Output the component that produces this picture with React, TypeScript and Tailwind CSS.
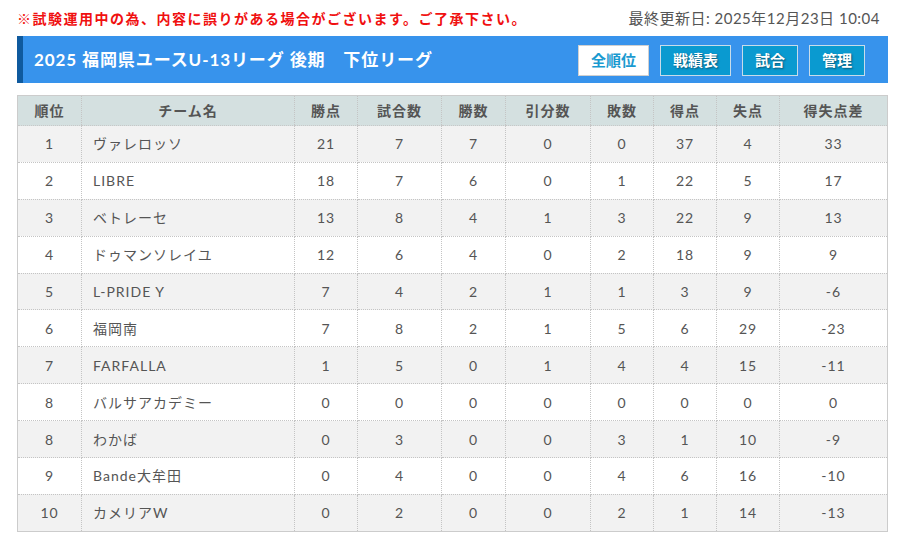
import React from "react";

type Row = {
  rank: string;
  team: string;
  pts: number;
  played: number;
  win: number;
  draw: number;
  lose: number;
  gf: number;
  ga: number;
  gd: number;
};

const rows: Row[] = [
  { rank: "1", team: "ヴァレロッソ", pts: 21, played: 7, win: 7, draw: 0, lose: 0, gf: 37, ga: 4, gd: 33 },
  { rank: "2", team: "LIBRE", pts: 18, played: 7, win: 6, draw: 0, lose: 1, gf: 22, ga: 5, gd: 17 },
  { rank: "3", team: "ベトレーセ", pts: 13, played: 8, win: 4, draw: 1, lose: 3, gf: 22, ga: 9, gd: 13 },
  { rank: "4", team: "ドゥマンソレイユ", pts: 12, played: 6, win: 4, draw: 0, lose: 2, gf: 18, ga: 9, gd: 9 },
  { rank: "5", team: "L-PRIDE Y", pts: 7, played: 4, win: 2, draw: 1, lose: 1, gf: 3, ga: 9, gd: -6 },
  { rank: "6", team: "福岡南", pts: 7, played: 8, win: 2, draw: 1, lose: 5, gf: 6, ga: 29, gd: -23 },
  { rank: "7", team: "FARFALLA", pts: 1, played: 5, win: 0, draw: 1, lose: 4, gf: 4, ga: 15, gd: -11 },
  { rank: "8", team: "バルサアカデミー", pts: 0, played: 0, win: 0, draw: 0, lose: 0, gf: 0, ga: 0, gd: 0 },
  { rank: "8", team: "わかば", pts: 0, played: 3, win: 0, draw: 0, lose: 3, gf: 1, ga: 10, gd: -9 },
  { rank: "9", team: "Bande大牟田", pts: 0, played: 4, win: 0, draw: 0, lose: 4, gf: 6, ga: 16, gd: -10 },
  { rank: "10", team: "カメリアW", pts: 0, played: 2, win: 0, draw: 0, lose: 2, gf: 1, ga: 14, gd: -13 },
];

const headers = ["順位", "チーム名", "勝点", "試合数", "勝数", "引分数", "敗数", "得点", "失点", "得失点差"];

function NavButton({ label, active }: { label: string; active?: boolean }) {
  return (
    <button
      className={
        active
          ? "h-[31px] px-[12px] bg-white border border-[#d0d0d0] text-[#1a9ad0] text-[15px] font-bold"
          : "h-[31px] px-[12px] bg-[#0a9ad0] border border-[#c8dcea] text-white text-[15px] font-bold [text-shadow:1px_1px_2px_rgba(0,0,0,0.45)]"
      }
    >
      {label}
    </button>
  );
}

export default function App() {
  return (
    <div className="w-[902px] h-[543px] bg-white px-[17px] font-['Lato','Noto_Sans_CJK_JP',sans-serif] text-[#555]">
      <div className="flex items-center justify-between h-[36px] pr-[5px]">
        <p className="text-[14px] font-bold text-[#f01010] tracking-[1.5px]">
          ※試験運用中の為、内容に誤りがある場合がございます。ご了承下さい。
        </p>
        <p className="text-[15px] text-[#555] tracking-[0.5px]">最終更新日: 2025年12月23日 10:04</p>
      </div>

      <div className="flex items-center justify-between h-[47px] w-[871px] bg-[#3793ec] border-l-[6px] border-[#0f5a9e] pl-[11px] pr-[23px]">
        <h1 className="text-[17px] font-bold text-white tracking-[0.9px]">
          2025 福岡県ユースU-13リーグ 後期　下位リーグ
        </h1>
        <div className="flex gap-[11px] pt-[2px]">
          <NavButton label="全順位" active />
          <NavButton label="戦績表" />
          <NavButton label="試合" />
          <NavButton label="管理" />
        </div>
      </div>

      <table className="mt-[12px] w-[871px] table-fixed border-collapse border border-solid border-[#ccc] text-[14px] tracking-[1px]">
        <colgroup>
          <col className="w-[64px]" />
          <col className="w-[213px]" />
          <col className="w-[63px]" />
          <col className="w-[84px]" />
          <col className="w-[64px]" />
          <col className="w-[85px]" />
          <col className="w-[63px]" />
          <col className="w-[63px]" />
          <col className="w-[63px]" />
          <col />
        </colgroup>
        <thead>
          <tr className="bg-[#d4e0e0] h-[30px]">
            {headers.map((h) => (
              <th
                key={h}
                className="font-bold text-center text-[#555] border-l border-dotted border-[#c4c4c4] first:border-l-0 border-b border-b-solid border-b-[#c8c8c8]"
              >
                {h}
              </th>
            ))}
          </tr>
        </thead>
        <tbody>
          {rows.map((r, i) => (
            <tr key={i} className={i % 2 === 0 ? "bg-[#f2f2f2] h-[36.9px]" : "bg-white h-[36.9px]"}>
              <td className="text-center border border-dotted border-[#c4c4c4]">{r.rank}</td>
              <td className="text-left pl-[11px] border border-dotted border-[#c4c4c4]">{r.team}</td>
              {[r.pts, r.played, r.win, r.draw, r.lose, r.gf, r.ga, r.gd].map((v, j) => (
                <td key={j} className="text-center border border-dotted border-[#c4c4c4]">
                  {v}
                </td>
              ))}
            </tr>
          ))}
        </tbody>
      </table>
    </div>
  );
}
